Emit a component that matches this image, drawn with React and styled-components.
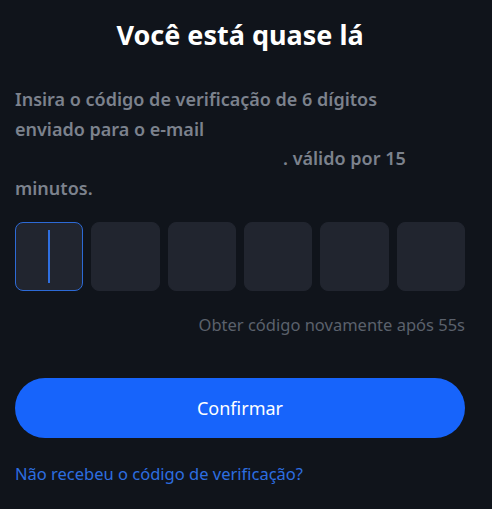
import React from 'react'
import styled, { createGlobalStyle } from 'styled-components'

const GlobalStyle = createGlobalStyle`
  html, body {
    margin: 0;
    padding: 0;
    background: #10141b;
  }
  body {
    font-family: "Noto Sans", "Open Sans", sans-serif;
  }
`

const Page = styled.div`
  width: 492px;
  height: 509px;
  box-sizing: border-box;
  padding: 15px 27px 0 15px;
  background: #10141b;
  display: flex;
  flex-direction: column;
`

const Title = styled.h1`
  margin: 0;
  text-align: center;
  color: #ffffff;
  font-size: 27px;
  font-weight: 700;
  line-height: 40px;
`

const Description = styled.p`
  width: 405px;
  margin: 30px 0 0;
  color: #7c828d;
  font-size: 18px;
  font-weight: 600;
  line-height: 29.5px;
`

const HiddenEmail = styled.span`
  display: inline-block;
  width: 268px;
  height: 1em;
`

const CodeRow = styled.div`
  display: grid;
  grid-template-columns: repeat(6, 1fr);
  gap: 8px;
  margin-top: 19px;
`

const CodeBox = styled.div`
  height: 69px;
  box-sizing: border-box;
  border-radius: 8px;
  background: #21252f;
  border: 1px solid ${p => (p.$active ? '#2d6ad6' : '#21252f')};
  display: flex;
  align-items: center;
  justify-content: center;
`

const Caret = styled.span`
  width: 2px;
  height: 53px;
  background: #2f6fe0;
`

const Resend = styled.div`
  margin-top: 23px;
  text-align: right;
  color: #5b616c;
  font-size: 16.5px;
  line-height: 22px;
`

const ConfirmButton = styled.button`
  margin-top: 42px;
  height: 60px;
  border: none;
  border-radius: 30px;
  background: #1764fb;
  color: #ffffff;
  font-family: inherit;
  font-size: 18px;
  font-weight: 400;
  cursor: pointer;
`

const HelpLink = styled.a`
  margin-top: 25px;
  color: #2d6ee0;
  font-size: 16.5px;
  line-height: 22px;
  text-decoration: none;
  cursor: pointer;
`

export default function App() {
  return (
    <>
      <GlobalStyle />
      <Page>
        <Title>Você está quase lá</Title>
        <Description>
          Insira o código de verificação de 6 dígitos enviado para o e-mail{' '}
          <HiddenEmail />. válido por 15 minutos.
        </Description>
        <CodeRow>
          {[0, 1, 2, 3, 4, 5].map(i => (
            <CodeBox key={i} $active={i === 0}>
              {i === 0 && <Caret />}
            </CodeBox>
          ))}
        </CodeRow>
        <Resend>Obter código novamente após 55s</Resend>
        <ConfirmButton>Confirmar</ConfirmButton>
        <HelpLink>Não recebeu o código de verificação?</HelpLink>
      </Page>
    </>
  )
}
